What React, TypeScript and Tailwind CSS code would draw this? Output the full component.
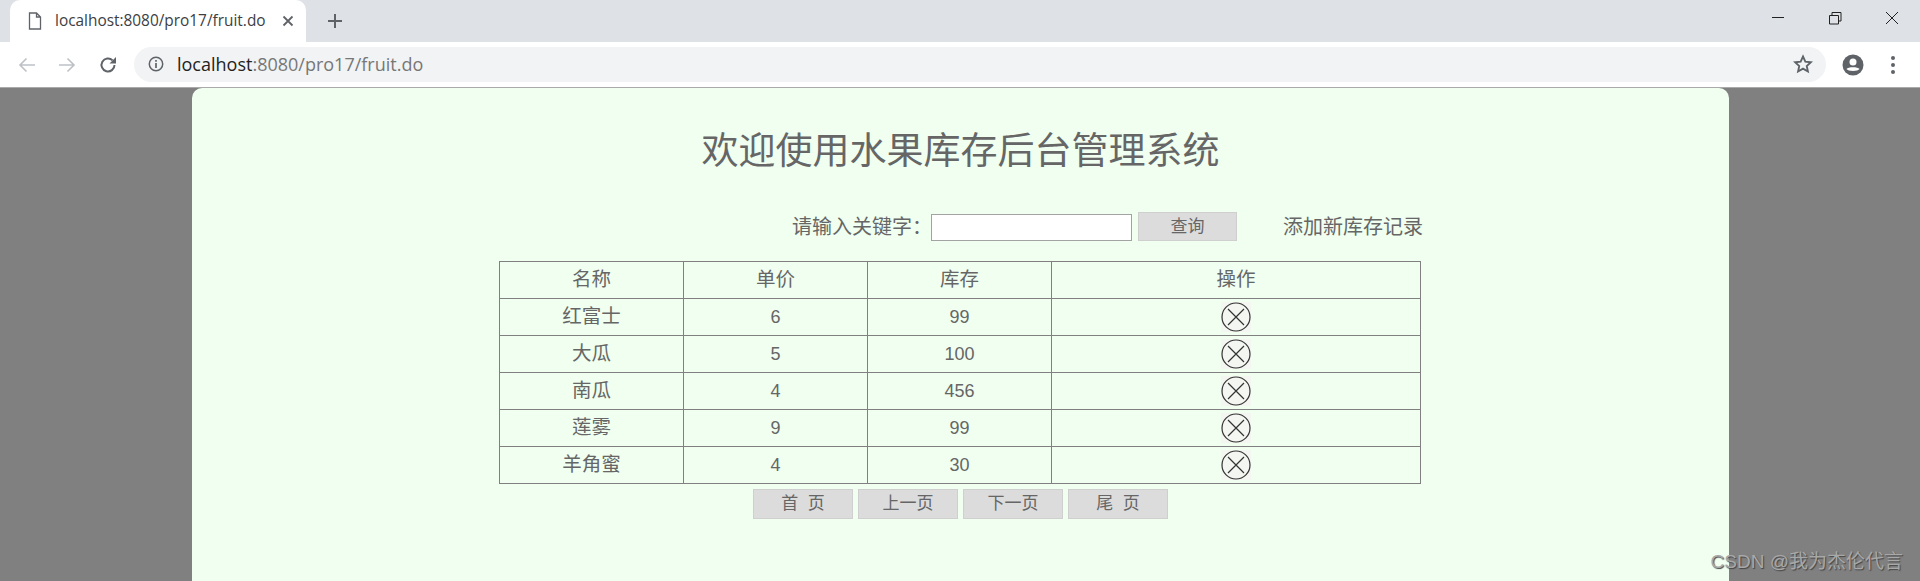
import React from "react";

const rows = [
  { name: "红富士", price: 6, stock: 99 },
  { name: "大瓜", price: 5, stock: 100 },
  { name: "南瓜", price: 4, stock: 456 },
  { name: "莲雾", price: 9, stock: 99 },
  { name: "羊角蜜", price: 4, stock: 30 },
];

const pageButtons = ["首  页", "上一页", "下一页", "尾  页"];

function DelIcon() {
  return (
    <svg width="30" height="30" viewBox="0 0 30 30" className="block bg-[#f4f6f2]">
      <circle cx="15" cy="15" r="14" fill="none" stroke="#333" strokeWidth="1.2" />
      <path d="M7 7 L23 23 M23 7 L7 23" stroke="#333" strokeWidth="1.2" />
    </svg>
  );
}

function TitleBar() {
  return (
    <div className="h-[42px] bg-[#dee1e6] flex items-stretch">
      <div className="ml-[10px] w-[296px] bg-white rounded-t-[10px] flex items-center">
        <svg width="14" height="18" viewBox="0 0 14 18" className="ml-[18px]">
          <path d="M1.5 1 H8.5 L12.5 5 V17 H1.5 Z M8.5 1 V5 H12.5" fill="none" stroke="#5f6368" strokeWidth="1.3" />
        </svg>
        <span className="ml-[13px] text-[15.4px] text-[#3c4043] w-[214px] whitespace-nowrap font-['Open_Sans',sans-serif]">
          localhost:8080/pro17/fruit.do
        </span>
        <svg width="12" height="12" viewBox="0 0 12 12" className="ml-[13px]">
          <path d="M1.5 1.5 L10.5 10.5 M10.5 1.5 L1.5 10.5" stroke="#5f6368" strokeWidth="1.8" />
        </svg>
      </div>
      <div className="flex items-center ml-[21px]">
        <svg width="16" height="16" viewBox="0 0 16 16">
          <path d="M8 1 V15 M1 8 H15" stroke="#5f6368" strokeWidth="2" />
        </svg>
      </div>
      <div className="ml-auto flex items-start pt-[11px] pr-[21px] gap-[43px]">
        <svg width="14" height="14" viewBox="0 0 14 14">
          <path d="M1 6.5 H13" stroke="#222" strokeWidth="1" />
        </svg>
        <svg width="14" height="14" viewBox="0 0 14 14">
          <path d="M1.5 4.5 H10.5 V13 H1.5 Z M4 4.5 V1.5 H13 V10 H10.5" fill="none" stroke="#222" strokeWidth="1" />
        </svg>
        <svg width="14" height="14" viewBox="0 0 14 14">
          <path d="M1 1 L13 13 M13 1 L1 13" stroke="#222" strokeWidth="1" />
        </svg>
      </div>
    </div>
  );
}

function Toolbar() {
  return (
    <div className="h-[46px] bg-white border-b border-[#aaaaaa] flex items-center">
      <svg width="18" height="16" viewBox="0 0 18 16" className="ml-[18px]">
        <path d="M17 8 H2 M8.5 1.5 L2 8 L8.5 14.5" fill="none" stroke="#bdc1c6" strokeWidth="1.6" />
      </svg>
      <svg width="18" height="16" viewBox="0 0 18 16" className="ml-[22px]">
        <path d="M1 8 H16 M9.5 1.5 L16 8 L9.5 14.5" fill="none" stroke="#bdc1c6" strokeWidth="1.6" />
      </svg>
      <svg width="18" height="18" viewBox="0 0 18 18" className="ml-[23px]">
        <path d="M15.5 9 A6.5 6.5 0 1 1 13.6 4.4" fill="none" stroke="#5f6368" strokeWidth="2" />
        <path d="M17 1 V7.5 H10.5 Z" fill="#5f6368" />
      </svg>
      <div className="ml-[17px] flex-1 h-[35px] rounded-full bg-[#f1f3f4] flex items-center mb-px">
        <svg width="16" height="16" viewBox="0 0 16 16" className="ml-[14px]">
          <circle cx="8" cy="8" r="6.7" fill="none" stroke="#5f6368" strokeWidth="1.5" />
          <path d="M8 7 V12 M8 4 V5.8" stroke="#5f6368" strokeWidth="1.7" />
        </svg>
        <span className="ml-[13px] text-[18px] text-[#777] font-['Open_Sans',sans-serif]">
          <span className="text-[#222]">localhost</span>:8080/pro17/fruit.do
        </span>
        <svg width="20" height="20" viewBox="0 0 24 24" className="ml-auto mr-[13px]">
          <path d="M12 3 L14.8 9.2 L21.5 9.9 L16.5 14.4 L17.9 21 L12 17.6 L6.1 21 L7.5 14.4 L2.5 9.9 L9.2 9.2 Z" fill="none" stroke="#5f6368" strokeWidth="2.2" />
        </svg>
      </div>
      <svg width="22" height="22" viewBox="0 0 22 22" className="ml-[16px]">
        <circle cx="11" cy="11" r="10.5" fill="#5f6368" />
        <circle cx="11" cy="8" r="3.5" fill="#fff" />
        <path d="M4.5 15 C6 12.5 16 12.5 17.5 15 C16 17.5 6 17.5 4.5 15 Z" fill="#fff" />
      </svg>
      <div className="ml-[27px] mr-[25px] flex flex-col gap-[3px]">
        <div className="w-[4px] h-[4px] rounded-full bg-[#5f6368]"></div>
        <div className="w-[4px] h-[4px] rounded-full bg-[#5f6368]"></div>
        <div className="w-[4px] h-[4px] rounded-full bg-[#5f6368]"></div>
      </div>
    </div>
  );
}

export default function App() {
  return (
    <div className="relative h-[581px] overflow-hidden bg-[#808080] font-['Liberation_Sans','Noto_Sans_CJK_SC',sans-serif]">
      <TitleBar />
      <Toolbar />
      <div className="ml-[192px] w-[1537px] h-[493px] bg-[#f0fff0] rounded-t-[10px] text-[#666]">
        <h1 className="pt-[37px] text-center text-[37px] leading-[54px] font-normal">欢迎使用水果库存后台管理系统</h1>
        <div className="mt-[33px] flex items-center h-[29px] text-[20px]">
          <span className="ml-[600px] w-[131px] whitespace-nowrap">请输入关键字：</span>
          <input className="ml-[8px] w-[201px] h-[27px] mt-[2px] bg-white border border-[#a3a3a3] outline-none" />
          <button className="ml-[6px] w-[99px] h-[29px] bg-[#dcdcdc] border border-[#cfcfcf] text-[17px] text-[#666]">查询</button>
          <span className="ml-[46px] whitespace-nowrap">添加新库存记录</span>
        </div>
        <table className="mt-[20px] ml-[307px] w-[922px] table-fixed border-collapse text-[18px] text-center">
          <colgroup>
            <col className="w-[184px]" />
            <col className="w-[184px]" />
            <col className="w-[184px]" />
            <col />
          </colgroup>
          <thead>
            <tr className="h-[37px] text-[19.5px]">
              <th className="border border-[#808080] font-normal p-0">名称</th>
              <th className="border border-[#808080] font-normal p-0">单价</th>
              <th className="border border-[#808080] font-normal p-0">库存</th>
              <th className="border border-[#808080] font-normal p-0">操作</th>
            </tr>
          </thead>
          <tbody>
            {rows.map((r) => (
              <tr key={r.name} className="h-[37px]">
                <td className="border border-[#808080] p-0 text-[19.5px]">{r.name}</td>
                <td className="border border-[#808080] p-0">{r.price}</td>
                <td className="border border-[#808080] p-0">{r.stock}</td>
                <td className="border border-[#808080] p-0">
                  <div className="flex justify-center">
                    <DelIcon />
                  </div>
                </td>
              </tr>
            ))}
          </tbody>
        </table>
        <div className="mt-[5px] ml-[561px] flex gap-[5px]">
          {pageButtons.map((b) => (
            <button key={b} className="w-[100px] h-[30px] bg-[#dcdcdc] border border-[#cfcfcf] text-[17px] text-[#666] whitespace-pre">
              {b}
            </button>
          ))}
        </div>
      </div>
      <div className="absolute right-[17px] bottom-[9px] text-[19px] leading-[20px] text-[#a8a8a8] [text-shadow:1px_1px_1px_#444]">
        CSDN @我为杰伦代言
      </div>
    </div>
  );
}
